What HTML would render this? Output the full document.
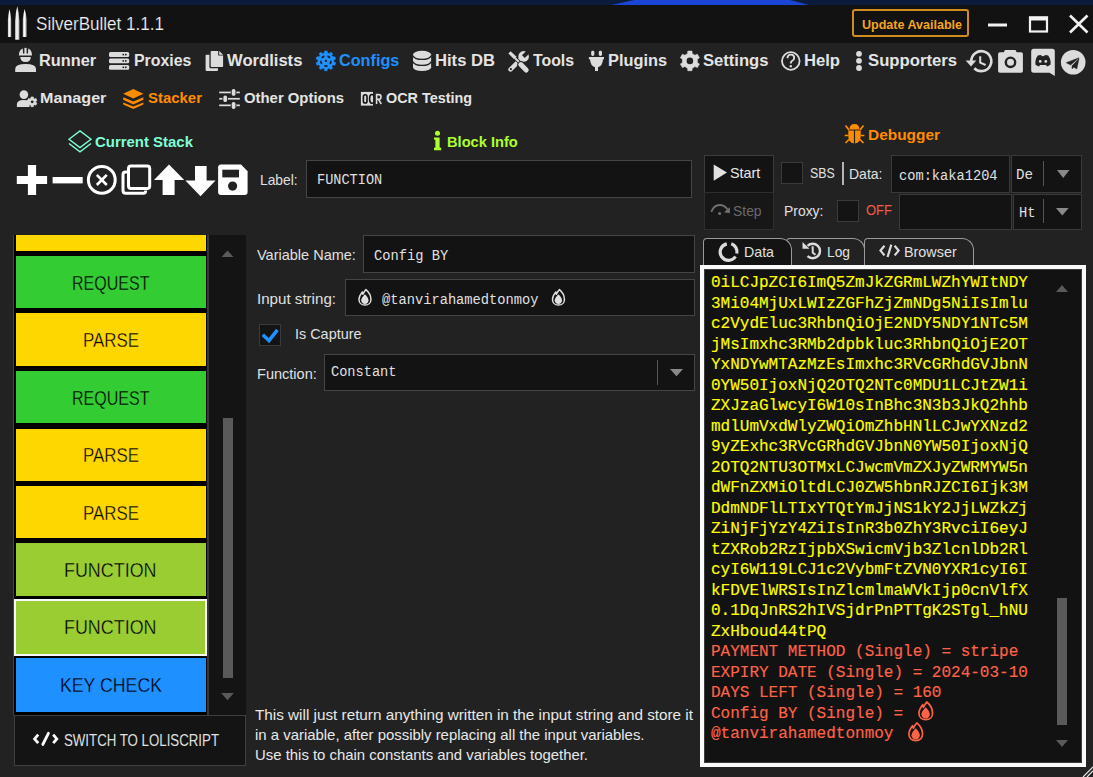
<!DOCTYPE html>
<html><head><meta charset="utf-8"><title>SilverBullet</title>
<style>
html,body{margin:0;padding:0;}
body{width:1093px;height:777px;position:relative;overflow:hidden;background:#222222;font-family:'Liberation Sans', sans-serif;}
svg{position:absolute;overflow:visible;}
</style></head><body>
<svg style="left:0;top:0" width="1093" height="5"><rect width="1093" height="5" fill="#0b1b3b"/><polygon points="611,5 634,0 790,0 809,5" fill="#1a45d6"/></svg>
<div style="position:absolute;left:0px;top:5px;width:1093px;height:38px;background:#121212"></div>
<div style="position:absolute;left:39.00px;top:53.30px;font:bold 16px/1 'Liberation Sans', sans-serif;color:#e4e4e4;white-space:pre;transform:scaleX(1.0196);transform-origin:0 0;">Runner</div>
<div style="position:absolute;left:133.60px;top:53.30px;font:bold 16px/1 'Liberation Sans', sans-serif;color:#e4e4e4;white-space:pre;transform:scaleX(0.9929);transform-origin:0 0;">Proxies</div>
<div style="position:absolute;left:227.40px;top:53.30px;font:bold 16px/1 'Liberation Sans', sans-serif;color:#e4e4e4;white-space:pre;transform:scaleX(1.0384);transform-origin:0 0;">Wordlists</div>
<div style="position:absolute;left:338.70px;top:53.30px;font:bold 16px/1 'Liberation Sans', sans-serif;color:#1e90ff;white-space:pre;transform:scaleX(1.0126);transform-origin:0 0;">Configs</div>
<div style="position:absolute;left:435.00px;top:53.30px;font:bold 16px/1 'Liberation Sans', sans-serif;color:#e4e4e4;white-space:pre;transform:scaleX(1.0384);transform-origin:0 0;">Hits DB</div>
<div style="position:absolute;left:532.50px;top:53.30px;font:bold 16px/1 'Liberation Sans', sans-serif;color:#e4e4e4;white-space:pre;transform:scaleX(0.9883);transform-origin:0 0;">Tools</div>
<div style="position:absolute;left:608.00px;top:53.30px;font:bold 16px/1 'Liberation Sans', sans-serif;color:#e4e4e4;white-space:pre;transform:scaleX(1.0211);transform-origin:0 0;">Plugins</div>
<div style="position:absolute;left:702.50px;top:53.30px;font:bold 16px/1 'Liberation Sans', sans-serif;color:#e4e4e4;white-space:pre;transform:scaleX(1.0376);transform-origin:0 0;">Settings</div>
<div style="position:absolute;left:804.00px;top:53.30px;font:bold 16px/1 'Liberation Sans', sans-serif;color:#e4e4e4;white-space:pre;transform:scaleX(1.0383);transform-origin:0 0;">Help</div>
<div style="position:absolute;left:868.00px;top:53.30px;font:bold 16px/1 'Liberation Sans', sans-serif;color:#e4e4e4;white-space:pre;transform:scaleX(1.0428);transform-origin:0 0;">Supporters</div>
<div style="position:absolute;left:39.60px;top:90.05px;font:bold 15px/1 'Liberation Sans', sans-serif;color:#e4e4e4;white-space:pre;transform:scaleX(1.0764);transform-origin:0 0;">Manager</div>
<div style="position:absolute;left:148.00px;top:90.05px;font:bold 15px/1 'Liberation Sans', sans-serif;color:#ff8c00;white-space:pre;transform:scaleX(0.9960);transform-origin:0 0;">Stacker</div>
<div style="position:absolute;left:243.60px;top:90.05px;font:bold 15px/1 'Liberation Sans', sans-serif;color:#e4e4e4;white-space:pre;transform:scaleX(0.9916);transform-origin:0 0;">Other Options</div>
<div style="position:absolute;left:386.00px;top:90.05px;font:bold 15px/1 'Liberation Sans', sans-serif;color:#e4e4e4;white-space:pre;transform:scaleX(0.9584);transform-origin:0 0;">OCR Testing</div>
<div style="position:absolute;left:36.00px;top:14.70px;font:normal 18px/1 'Liberation Sans', sans-serif;color:#f2f2f2;white-space:pre;transform:scaleX(0.9476);transform-origin:0 0;-webkit-text-stroke:0.2px #121212;">SilverBullet 1.1.1</div>
<div style="position:absolute;left:852px;top:9px;width:113px;height:24px;border:2px solid #d08c1e;border-radius:3px;background:#121212"></div>
<div style="position:absolute;left:861.60px;top:17.95px;font:bold 13px/1 'Liberation Sans', sans-serif;color:#f5a41f;white-space:pre;transform:scaleX(0.9634);transform-origin:0 0;">Update Available</div>
<div style="position:absolute;left:95.00px;top:134.25px;font:bold 15px/1 'Liberation Sans', sans-serif;color:#7fffd4;white-space:pre;transform:scaleX(0.9962);transform-origin:0 0;">Current Stack</div>
<div style="position:absolute;left:447.00px;top:134.25px;font:bold 15px/1 'Liberation Sans', sans-serif;color:#adff2f;white-space:pre;transform:scaleX(0.9763);transform-origin:0 0;">Block Info</div>
<div style="position:absolute;left:868.00px;top:127.45px;font:bold 15px/1 'Liberation Sans', sans-serif;color:#ff8c00;white-space:pre;transform:scaleX(1.0283);transform-origin:0 0;">Debugger</div>
<div style="position:absolute;left:260.40px;top:172.25px;font:normal 15px/1 'Liberation Sans', sans-serif;color:#e0e0e0;white-space:pre;transform:scaleX(0.9199);transform-origin:0 0;">Label:</div>
<div style="position:absolute;left:306px;top:159.6px;width:384.1px;height:36.3px;background:#131313;border:1px solid #454545"></div>
<div style="position:absolute;left:316.50px;top:173.16px;font:normal 14px/1 'Liberation Mono', monospace;color:#e0e0e0;white-space:pre;transform:scaleX(0.9700);transform-origin:0 0;">FUNCTION</div>
<div style="position:absolute;left:13px;top:235px;width:1px;height:479.5px;background:#444"></div>
<div style="position:absolute;left:14px;top:235px;width:193px;height:479.5px;background:#000"></div>
<div style="position:absolute;left:207px;top:235px;width:2px;height:479.5px;background:#383838"></div>
<div style="position:absolute;left:209px;top:235px;width:37px;height:479.5px;background:#141414"></div>
<div style="position:absolute;left:16px;top:235px;width:190px;height:16.400000000000006px;background:#ffd700"></div>
<div style="position:absolute;left:16px;top:256.3px;width:190px;height:51.89999999999998px;background:#33cc33"></div>
<div style="position:absolute;left:16px;top:313.2px;width:190px;height:53.30000000000001px;background:#ffd700"></div>
<div style="position:absolute;left:16px;top:371.1px;width:190px;height:52.299999999999955px;background:#33cc33"></div>
<div style="position:absolute;left:16px;top:428.6px;width:190px;height:52.69999999999999px;background:#ffd700"></div>
<div style="position:absolute;left:16px;top:486.3px;width:190px;height:51.69999999999999px;background:#ffd700"></div>
<div style="position:absolute;left:16px;top:543.2px;width:190px;height:53.299999999999955px;background:#9acd32"></div>
<div style="position:absolute;left:16px;top:600.8px;width:190px;height:52.40000000000009px;background:#9acd32"></div>
<div style="position:absolute;left:16px;top:658.4px;width:190px;height:53.39999999999998px;background:#1e90ff"></div>
<div style="position:absolute;left:14.4px;top:599.2px;width:188.7px;height:52.4px;border:2.2px solid #f8f8f8;background:#9acd32"></div>
<div style="position:absolute;left:222.7px;top:418px;width:10.3px;height:260px;background:#5a5a5a"></div>
<svg style="left:0;top:0" width="1" height="1"><polygon points="221.5,257 233.5,257 227.5,250.5" fill="#5a5a5a"/><polygon points="221.2,693 233.8,693 227.5,700.2" fill="#5a5a5a"/></svg>
<div style="position:absolute;left:13.5px;top:715px;width:230.5px;height:48.5px;background:#141414;border:1px solid #3f3f3f"></div>
<div style="position:absolute;left:63.50px;top:732.54px;font:normal 15.6px/1 'Liberation Sans', sans-serif;color:#e0e0e0;white-space:pre;transform:scaleX(0.8505);transform-origin:0 0;">SWITCH TO LOLISCRIPT</div>
<div style="position:absolute;left:256.60px;top:247.15px;font:normal 15px/1 'Liberation Sans', sans-serif;color:#e0e0e0;white-space:pre;transform:scaleX(0.9669);transform-origin:0 0;">Variable Name:</div>
<div style="position:absolute;left:363.3px;top:235.1px;width:329.7px;height:35.6px;background:#131313;border:1px solid #454545"></div>
<div style="position:absolute;left:373.90px;top:249.26px;font:normal 14px/1 'Liberation Mono', monospace;color:#e0e0e0;white-space:pre;transform:scaleX(0.9812);transform-origin:0 0;">Config BY</div>
<div style="position:absolute;left:256.60px;top:291.15px;font:normal 15px/1 'Liberation Sans', sans-serif;color:#e0e0e0;white-space:pre;transform:scaleX(1.0078);transform-origin:0 0;">Input string:</div>
<div style="position:absolute;left:344.5px;top:279.2px;width:348.5px;height:34.6px;background:#131313;border:1px solid #454545"></div>
<div style="position:absolute;left:382.30px;top:293.16px;font:normal 14px/1 'Liberation Mono', monospace;color:#e0e0e0;white-space:pre;transform:scaleX(0.9803);transform-origin:0 0;">@tanvirahamedtonmoy</div>
<div style="position:absolute;left:258.9px;top:323.9px;width:20.3px;height:20.3px;background:#141414;border:1px solid #3a3a3a"></div>
<div style="position:absolute;left:295.40px;top:325.65px;font:normal 15px/1 'Liberation Sans', sans-serif;color:#e0e0e0;white-space:pre;transform:scaleX(0.9609);transform-origin:0 0;">Is Capture</div>
<div style="position:absolute;left:256.60px;top:365.85px;font:normal 15px/1 'Liberation Sans', sans-serif;color:#e0e0e0;white-space:pre;transform:scaleX(0.9692);transform-origin:0 0;">Function:</div>
<div style="position:absolute;left:324.3px;top:354.1px;width:368.7px;height:34.7px;background:#131313;border:1px solid #454545"></div>
<div style="position:absolute;left:331.00px;top:364.86px;font:normal 14px/1 'Liberation Mono', monospace;color:#e0e0e0;white-space:pre;transform:scaleX(0.9744);transform-origin:0 0;">Constant</div>
<div style="position:absolute;left:656.8px;top:360px;width:1.2px;height:25px;background:#555"></div>
<svg style="left:0;top:0" width="1" height="1"><polygon points="670,369 683,369 676.5,376.2" fill="#8a8a8a"/></svg>
<div style="position:absolute;left:254.50px;top:706.75px;font:normal 15px/1 'Liberation Sans', sans-serif;color:#e8e8e8;white-space:pre;transform:scaleX(1.0181);transform-origin:0 0;">This will just return anything written in the input string and store it</div>
<div style="position:absolute;left:254.50px;top:726.95px;font:normal 15px/1 'Liberation Sans', sans-serif;color:#e8e8e8;white-space:pre;transform:scaleX(0.9939);transform-origin:0 0;">in a variable, after possibly replacing all the input variables.</div>
<div style="position:absolute;left:254.50px;top:746.65px;font:normal 15px/1 'Liberation Sans', sans-serif;color:#e8e8e8;white-space:pre;transform:scaleX(0.9934);transform-origin:0 0;">Use this to chain constants and variables together.</div>
<div style="position:absolute;left:704px;top:155.3px;width:68px;height:35.5px;background:#131313;border:1px solid #3c3c3c"></div>
<div style="position:absolute;left:729.70px;top:165.25px;font:normal 15px/1 'Liberation Sans', sans-serif;color:#e8e8e8;white-space:pre;transform:scaleX(0.9562);transform-origin:0 0;">Start</div>
<div style="position:absolute;left:704px;top:191.8px;width:68px;height:36.5px;background:#171717;border:1px solid #2e2e2e"></div>
<div style="position:absolute;left:733.40px;top:203.15px;font:normal 15px/1 'Liberation Sans', sans-serif;color:#6a6a6a;white-space:pre;transform:scaleX(0.9268);transform-origin:0 0;">Step</div>
<div style="position:absolute;left:781px;top:162.4px;width:20px;height:20px;background:#141414;border:1px solid #3a3a3a"></div>
<div style="position:absolute;left:809.70px;top:165.25px;font:normal 15px/1 'Liberation Sans', sans-serif;color:#e0e0e0;white-space:pre;transform:scaleX(0.8229);transform-origin:0 0;">SBS</div>
<div style="position:absolute;left:842px;top:162.4px;width:2px;height:22.4px;background:#b4b4b4"></div>
<div style="position:absolute;left:849.40px;top:166.15px;font:normal 15px/1 'Liberation Sans', sans-serif;color:#e0e0e0;white-space:pre;transform:scaleX(0.9342);transform-origin:0 0;">Data:</div>
<div style="position:absolute;left:891.3px;top:155.3px;width:116.5px;height:35.5px;background:#131313;border:1px solid #3a3a3a"></div>
<div style="position:absolute;left:899.20px;top:169.16px;font:normal 14px/1 'Liberation Mono', monospace;color:#e0e0e0;white-space:pre;transform:scaleX(0.9779);transform-origin:0 0;">com:kaka1204</div>
<div style="position:absolute;left:1010.6px;top:155.3px;width:69px;height:35.5px;background:#131313;border:1px solid #3a3a3a"></div>
<div style="position:absolute;left:1016.30px;top:168.26px;font:normal 14px/1 'Liberation Mono', monospace;color:#e0e0e0;white-space:pre;transform:scaleX(1.0112);transform-origin:0 0;clip-path:inset(0 30% 0 0);">Def</div>
<div style="position:absolute;left:1043px;top:161.4px;width:1px;height:24.4px;background:#555"></div>
<svg style="left:0;top:0" width="1" height="1"><polygon points="1057,170 1069.5,170 1063.2,178" fill="#8a8a8a"/></svg>
<div style="position:absolute;left:784.00px;top:203.25px;font:normal 15px/1 'Liberation Sans', sans-serif;color:#e0e0e0;white-space:pre;transform:scaleX(0.9267);transform-origin:0 0;">Proxy:</div>
<div style="position:absolute;left:837.1px;top:200.1px;width:19.7px;height:19.6px;background:#141414;border:1px solid #3a3a3a"></div>
<div style="position:absolute;left:866.20px;top:202.42px;font:normal 15.5px/1 'Liberation Sans', sans-serif;color:#f65a40;white-space:pre;transform:scaleX(0.8387);transform-origin:0 0;">OFF</div>
<div style="position:absolute;left:899.3px;top:193.8px;width:111px;height:34.7px;background:#131313;border:1px solid #3a3a3a"></div>
<div style="position:absolute;left:1012.9px;top:193.8px;width:66.7px;height:34.7px;background:#131313;border:1px solid #3a3a3a"></div>
<div style="position:absolute;left:1018.70px;top:206.16px;font:normal 14px/1 'Liberation Mono', monospace;color:#e0e0e0;white-space:pre;transform:scaleX(0.9814);transform-origin:0 0;">Ht</div>
<div style="position:absolute;left:1042.5px;top:199px;width:1px;height:24px;background:#555"></div>
<svg style="left:0;top:0" width="1" height="1"><polygon points="1056,208 1068.6,208 1062.3,215.5" fill="#8a8a8a"/></svg>
<div style="position:absolute;left:786.2px;top:238px;width:77px;height:27px;background:#222;border:1px solid #9a9a9a;border-bottom:none;border-radius:4px 12px 0 0"></div>
<div style="position:absolute;left:863.6px;top:238px;width:108.6px;height:27px;background:#222;border:1px solid #9a9a9a;border-bottom:none;border-radius:4px 12px 0 0"></div>
<div style="position:absolute;left:702.8px;top:238px;width:87.2px;height:27px;background:#131313;border:1px solid #9a9a9a;border-bottom:none;border-radius:4px 12px 0 0"></div>
<div style="position:absolute;left:743.80px;top:244.05px;font:normal 15px/1 'Liberation Sans', sans-serif;color:#e0e0e0;white-space:pre;transform:scaleX(0.9467);transform-origin:0 0;">Data</div>
<div style="position:absolute;left:827.00px;top:244.25px;font:normal 15px/1 'Liberation Sans', sans-serif;color:#e0e0e0;white-space:pre;transform:scaleX(0.9189);transform-origin:0 0;">Log</div>
<div style="position:absolute;left:903.50px;top:244.25px;font:normal 15px/1 'Liberation Sans', sans-serif;color:#e0e0e0;white-space:pre;transform:scaleX(0.9579);transform-origin:0 0;">Browser</div>
<div style="position:absolute;left:700px;top:265px;width:377.5px;height:494.3px;background:#121212;border:4px solid #fafafa;box-shadow:inset 0 0 0 1px #3c3c3c"></div>
<div style="position:absolute;left:1057px;top:598px;width:10px;height:127px;background:#5a5a5a"></div>
<svg style="left:0;top:0" width="1" height="1"><polygon points="1056,292 1068,292 1062,285" fill="#5a5a5a"/><polygon points="1056,740 1068,740 1062,747" fill="#5a5a5a"/></svg>
<div style="position:absolute;left:711.00px;top:275.24px;font:normal 16px/1 'Liberation Mono', monospace;color:#ffff00;white-space:pre;-webkit-text-stroke:0.15px #ffff00;">0iLCJpZCI6ImQ5ZmJkZGRmLWZhYWItNDY</div>
<div style="position:absolute;left:711.00px;top:295.74px;font:normal 16px/1 'Liberation Mono', monospace;color:#ffff00;white-space:pre;-webkit-text-stroke:0.15px #ffff00;">3Mi04MjUxLWIzZGFhZjZmNDg5NiIsImlu</div>
<div style="position:absolute;left:711.00px;top:316.24px;font:normal 16px/1 'Liberation Mono', monospace;color:#ffff00;white-space:pre;-webkit-text-stroke:0.15px #ffff00;">c2VydEluc3RhbnQiOjE2NDY5NDY1NTc5M</div>
<div style="position:absolute;left:711.00px;top:336.74px;font:normal 16px/1 'Liberation Mono', monospace;color:#ffff00;white-space:pre;-webkit-text-stroke:0.15px #ffff00;">jMsImxhc3RMb2dpbkluc3RhbnQiOjE2OT</div>
<div style="position:absolute;left:711.00px;top:357.24px;font:normal 16px/1 'Liberation Mono', monospace;color:#ffff00;white-space:pre;-webkit-text-stroke:0.15px #ffff00;">YxNDYwMTAzMzEsImxhc3RVcGRhdGVJbnN</div>
<div style="position:absolute;left:711.00px;top:377.74px;font:normal 16px/1 'Liberation Mono', monospace;color:#ffff00;white-space:pre;-webkit-text-stroke:0.15px #ffff00;">0YW50IjoxNjQ2OTQ2NTc0MDU1LCJtZW1i</div>
<div style="position:absolute;left:711.00px;top:398.24px;font:normal 16px/1 'Liberation Mono', monospace;color:#ffff00;white-space:pre;-webkit-text-stroke:0.15px #ffff00;">ZXJzaGlwcyI6W10sInBhc3N3b3JkQ2hhb</div>
<div style="position:absolute;left:711.00px;top:418.74px;font:normal 16px/1 'Liberation Mono', monospace;color:#ffff00;white-space:pre;-webkit-text-stroke:0.15px #ffff00;">mdlUmVxdWlyZWQiOmZhbHNlLCJwYXNzd2</div>
<div style="position:absolute;left:711.00px;top:439.24px;font:normal 16px/1 'Liberation Mono', monospace;color:#ffff00;white-space:pre;-webkit-text-stroke:0.15px #ffff00;">9yZExhc3RVcGRhdGVJbnN0YW50IjoxNjQ</div>
<div style="position:absolute;left:711.00px;top:459.74px;font:normal 16px/1 'Liberation Mono', monospace;color:#ffff00;white-space:pre;-webkit-text-stroke:0.15px #ffff00;">2OTQ2NTU3OTMxLCJwcmVmZXJyZWRMYW5n</div>
<div style="position:absolute;left:711.00px;top:480.24px;font:normal 16px/1 'Liberation Mono', monospace;color:#ffff00;white-space:pre;-webkit-text-stroke:0.15px #ffff00;">dWFnZXMiOltdLCJ0ZW5hbnRJZCI6Ijk3M</div>
<div style="position:absolute;left:711.00px;top:500.74px;font:normal 16px/1 'Liberation Mono', monospace;color:#ffff00;white-space:pre;-webkit-text-stroke:0.15px #ffff00;">DdmNDFlLTIxYTQtYmJjNS1kY2JjLWZkZj</div>
<div style="position:absolute;left:711.00px;top:521.24px;font:normal 16px/1 'Liberation Mono', monospace;color:#ffff00;white-space:pre;-webkit-text-stroke:0.15px #ffff00;">ZiNjFjYzY4ZiIsInR3b0ZhY3RvciI6eyJ</div>
<div style="position:absolute;left:711.00px;top:541.74px;font:normal 16px/1 'Liberation Mono', monospace;color:#ffff00;white-space:pre;-webkit-text-stroke:0.15px #ffff00;">tZXRob2RzIjpbXSwicmVjb3ZlcnlDb2Rl</div>
<div style="position:absolute;left:711.00px;top:562.24px;font:normal 16px/1 'Liberation Mono', monospace;color:#ffff00;white-space:pre;-webkit-text-stroke:0.15px #ffff00;">cyI6W119LCJ1c2VybmFtZVN0YXR1cyI6I</div>
<div style="position:absolute;left:711.00px;top:582.74px;font:normal 16px/1 'Liberation Mono', monospace;color:#ffff00;white-space:pre;-webkit-text-stroke:0.15px #ffff00;">kFDVElWRSIsInZlcmlmaWVkIjp0cnVlfX</div>
<div style="position:absolute;left:711.00px;top:603.24px;font:normal 16px/1 'Liberation Mono', monospace;color:#ffff00;white-space:pre;-webkit-text-stroke:0.15px #ffff00;">0.1DqJnRS2hIVSjdrPnPTTgK2STgl_hNU</div>
<div style="position:absolute;left:711.00px;top:623.74px;font:normal 16px/1 'Liberation Mono', monospace;color:#ffff00;white-space:pre;-webkit-text-stroke:0.15px #ffff00;">ZxHboud44tPQ</div>
<div style="position:absolute;left:711.00px;top:644.24px;font:normal 16px/1 'Liberation Mono', monospace;color:#ff6347;white-space:pre;-webkit-text-stroke:0.15px #ff6347;">PAYMENT METHOD (Single) = stripe</div>
<div style="position:absolute;left:711.00px;top:664.74px;font:normal 16px/1 'Liberation Mono', monospace;color:#ff6347;white-space:pre;-webkit-text-stroke:0.15px #ff6347;">EXPIRY DATE (Single) = 2024-03-10</div>
<div style="position:absolute;left:711.00px;top:685.24px;font:normal 16px/1 'Liberation Mono', monospace;color:#ff6347;white-space:pre;-webkit-text-stroke:0.15px #ff6347;">DAYS LEFT (Single) = 160</div>
<div style="position:absolute;left:711.00px;top:705.74px;font:normal 16px/1 'Liberation Mono', monospace;color:#ff6347;white-space:pre;-webkit-text-stroke:0.15px #ff6347;">Config BY (Single) =</div>
<div style="position:absolute;left:711.00px;top:726.24px;font:normal 16px/1 'Liberation Mono', monospace;color:#ff6347;white-space:pre;-webkit-text-stroke:0.15px #ff6347;">@tanvirahamedtonmoy</div>
<div style="position:absolute;left:71.85px;top:273.73px;font:normal 19.5px/1 'Liberation Sans', sans-serif;color:#000;white-space:pre;transform:scaleX(0.8221);transform-origin:0 0;-webkit-text-stroke:0.35px #33cc33;">REQUEST</div>
<div style="position:absolute;left:82.60px;top:330.62px;font:normal 19.5px/1 'Liberation Sans', sans-serif;color:#000;white-space:pre;transform:scaleX(0.8659);transform-origin:0 0;-webkit-text-stroke:0.35px #ffd700;">PARSE</div>
<div style="position:absolute;left:71.85px;top:388.53px;font:normal 19.5px/1 'Liberation Sans', sans-serif;color:#000;white-space:pre;transform:scaleX(0.8221);transform-origin:0 0;-webkit-text-stroke:0.35px #33cc33;">REQUEST</div>
<div style="position:absolute;left:82.60px;top:446.03px;font:normal 19.5px/1 'Liberation Sans', sans-serif;color:#000;white-space:pre;transform:scaleX(0.8659);transform-origin:0 0;-webkit-text-stroke:0.35px #ffd700;">PARSE</div>
<div style="position:absolute;left:82.60px;top:503.72px;font:normal 19.5px/1 'Liberation Sans', sans-serif;color:#000;white-space:pre;transform:scaleX(0.8659);transform-origin:0 0;-webkit-text-stroke:0.35px #ffd700;">PARSE</div>
<div style="position:absolute;left:64.35px;top:560.62px;font:normal 19.5px/1 'Liberation Sans', sans-serif;color:#000;white-space:pre;transform:scaleX(0.9181);transform-origin:0 0;-webkit-text-stroke:0.35px #9acd32;">FUNCTION</div>
<div style="position:absolute;left:64.35px;top:618.22px;font:normal 19.5px/1 'Liberation Sans', sans-serif;color:#000;white-space:pre;transform:scaleX(0.9181);transform-origin:0 0;-webkit-text-stroke:0.35px #9acd32;">FUNCTION</div>
<div style="position:absolute;left:59.60px;top:675.82px;font:normal 19.5px/1 'Liberation Sans', sans-serif;color:#000;white-space:pre;transform:scaleX(0.9078);transform-origin:0 0;-webkit-text-stroke:0.35px #1e90ff;">KEY CHECK</div>
<svg style="left:0;top:0" width="1" height="1">
<rect x="988" y="23.5" width="19" height="3" fill="#f2f2f2"/>
<rect x="1030" y="17.5" width="17" height="14" fill="none" stroke="#f2f2f2" stroke-width="2.2"/>
<rect x="1029" y="16.5" width="19" height="4" fill="#f2f2f2"/>
<path d="M1070 15.5 L1087.5 32.5 M1087.5 15.5 L1070 32.5" stroke="#f2f2f2" stroke-width="2.6"/>
</svg>
<svg style="left:0;top:0" width="1" height="1" fill="#fff">
<rect x="16.8" y="176" width="30.3" height="8" />
<rect x="27.9" y="165" width="8.2" height="30" />
<rect x="52.6" y="177" width="30.1" height="6.4" />
<circle cx="101.8" cy="179.9" r="13.4" fill="none" stroke="#fff" stroke-width="3"/>
<path d="M96.8 174.8 L106.8 185 M106.8 174.8 L96.8 185" stroke="#fff" stroke-width="2.6" fill="none"/>
<rect x="128.5" y="166" width="21.2" height="22.4" rx="2.5" fill="none" stroke="#fff" stroke-width="3"/>
<path d="M127 171.9 L125.5 171.9 Q123 171.9 123 174.4 L123 190.5 Q123 193.2 125.7 193.2 L143.5 193.2 Q145.7 193.2 145.7 190.5" fill="none" stroke="#fff" stroke-width="3"/>
<polygon points="169,164.6 184.2,180 174.6,180 174.6,195 162.6,195 162.6,180 154,180"/>
<polygon points="195,165.9 206.6,165.9 206.6,180.6 215.5,180.6 200.5,196.2 185.4,180.6 195,180.6"/>
<path d="M218.1 167.5 Q218.1 164.6 221 164.6 L241 164.6 L247.6 171.2 L247.6 192.1 Q247.6 195 244.7 195 L221 195 Q218.1 195 218.1 192.1 Z"/>
<rect x="222.3" y="169.7" width="16.7" height="7.7" fill="#222"/>
<circle cx="232.6" cy="186.1" r="4.6" fill="#222"/>
</svg>
<svg style="left:0;top:0" width="1" height="1"><path d="M262.8 334.8 L269 340.6 L277.4 329.9" fill="none" stroke="#1e90ff" stroke-width="3.6"/></svg>
<svg style="left:0;top:0" width="1" height="1"><polygon points="713.7,164.6 727,172.6 713.7,180.7" fill="#e0e0e0"/></svg>
<svg style="left:0;top:0" width="1" height="1" fill="#dcdcdc">
<!-- runner hard hat -->
<path d="M18.9 55.6 Q18.9 50 22.8 48.6 L23 53.5 L24.4 53.5 L24.4 48 Q25.5 47.6 26.6 48 L26.6 53.5 L28 53.5 L28.2 48.6 Q32 50 32 55.6 Z"/>
<path d="M20.3 57 L30.8 57 Q30.8 62 25.55 62 Q20.3 62 20.3 57 Z"/>
<path d="M15.2 72 L36 72 L36 69 Q36 64 25.6 64 Q15.2 64 15.2 69 Z"/>
<!-- proxies server -->
<rect x="109" y="52" width="20.2" height="5" rx="1.5"/>
<rect x="109" y="58.5" width="20.2" height="4.8" rx="1.5"/>
<rect x="109" y="64.9" width="20.2" height="4.8" rx="1.5"/>
<g fill="#222"><rect x="122.5" y="53.8" width="1.6" height="1.6"/><rect x="125" y="53.8" width="1.6" height="1.6"/>
<rect x="122.5" y="60.1" width="1.6" height="1.6"/><rect x="125" y="60.1" width="1.6" height="1.6"/>
<rect x="122.5" y="66.5" width="1.6" height="1.6"/><rect x="125" y="66.5" width="1.6" height="1.6"/></g>
<!-- wordlists files -->
<path d="M205.6 55.5 Q205.6 54.7 206.4 54.7 L209.4 54.7 L209.4 67 Q209.4 68.2 210.6 68.2 L218 68.2 L218 70.1 Q218 70.9 217.2 70.9 L206.4 70.9 Q205.6 70.9 205.6 70.1 Z"/>
<path d="M210.7 51.8 Q210.7 51 211.5 51 L218.2 51 L218.2 55.6 L223.1 55.6 L223.1 66.3 Q223.1 67.1 222.3 67.1 L211.5 67.1 Q210.7 67.1 210.7 66.3 Z"/>
<path d="M219.2 51 L223.1 54.8 L219.2 54.8 Z"/>
<!-- hits db -->
<ellipse cx="422.05" cy="54.6" rx="9.05" ry="3.8"/>
<rect x="413" y="54.6" width="18.1" height="12.6"/>
<ellipse cx="422.05" cy="67.2" rx="9.05" ry="3.8"/>
<path d="M413 55.6 A9.05 3.8 0 0 0 431.1 55.6" fill="none" stroke="#222" stroke-width="1.4"/>
<path d="M413 61.6 A9.05 3.8 0 0 0 431.1 61.6" fill="none" stroke="#222" stroke-width="1.4"/>
<!-- tools -->
<circle cx="523.6" cy="56.4" r="5.3"/>
<path d="M523.4 56.6 L529.5 50.5" stroke="#222" stroke-width="4"/>
<path d="M510.5 69.5 L520.5 59.5" stroke="#dcdcdc" stroke-width="4.4" stroke-linecap="round"/>
<circle cx="510.9" cy="69.1" r="1.1" fill="#222"/>
<path d="M508.4 53.6 L510.6 51.2 L516.8 57 L514.4 59.4 Z"/>
<path d="M515.2 58.2 L520.6 63.6" stroke="#222" stroke-width="3.6"/>
<path d="M515.2 58.2 L520.6 63.6" stroke="#dcdcdc" stroke-width="2"/>
<path d="M520.8 64.6 L526.2 70" stroke="#222" stroke-width="7" stroke-linecap="round"/>
<path d="M520.8 64.6 L526.2 70" stroke="#dcdcdc" stroke-width="5" stroke-linecap="round"/>
<!-- plugins plug -->
<rect x="591.2" y="50.8" width="3.1" height="5.2" rx="1.4"/>
<rect x="598.8" y="50.8" width="3.2" height="5.2" rx="1.4"/>
<path d="M588.9 57 L604 57 L604 59 L603 59.5 Q602.5 66 598 67.3 L598 71 L595 71 L595 67.3 Q590.5 66 590 59.5 L588.9 59 Z"/>
<!-- settings gear -->
<path fill-rule="evenodd" d=""/>
</svg>
<svg style="left:0;top:0" width="1" height="1"><polygon points="687.58,53.66 687.82,51.12 691.98,51.12 692.22,53.66 695.01,55.27 697.33,54.20 699.41,57.82 697.33,59.29 697.33,62.51 699.41,63.98 697.33,67.60 695.01,66.53 692.22,68.14 691.98,70.68 687.82,70.68 687.58,68.14 684.79,66.53 682.47,67.60 680.39,63.98 682.47,62.51 682.47,59.29 680.39,57.82 682.47,54.20 684.79,55.27" fill="#dcdcdc" stroke="#dcdcdc" stroke-width="0.6" stroke-linejoin="round"/><circle cx="689.9" cy="60.9" r="3.3" fill="#222"/><polygon points="324.47,53.03 324.62,51.08 327.18,51.08 327.33,53.03 329.37,53.69 330.63,52.20 332.71,53.71 331.69,55.37 332.94,57.11 334.84,56.65 335.63,59.09 333.83,59.83 333.83,61.97 335.63,62.71 334.84,65.15 332.94,64.69 331.69,66.43 332.71,68.09 330.63,69.60 329.37,68.11 327.33,68.77 327.18,70.72 324.62,70.72 324.47,68.77 322.43,68.11 321.17,69.60 319.09,68.09 320.11,66.43 318.86,64.69 316.96,65.15 316.17,62.71 317.97,61.97 317.97,59.83 316.17,59.09 316.96,56.65 318.86,57.11 320.11,55.37 319.09,53.71 321.17,52.20 322.43,53.69" fill="#1e90ff" stroke="#1e90ff" stroke-width="0.6" stroke-linejoin="round"/><ellipse cx="328.84" cy="56.85" rx="1.9" ry="1.0" transform="rotate(36.0 328.84 56.85)" fill="#222"/><ellipse cx="330.66" cy="62.45" rx="1.9" ry="1.0" transform="rotate(108.0 330.66 62.45)" fill="#222"/><ellipse cx="325.90" cy="65.90" rx="1.9" ry="1.0" transform="rotate(180.0 325.90 65.90)" fill="#222"/><ellipse cx="321.14" cy="62.45" rx="1.9" ry="1.0" transform="rotate(252.0 321.14 62.45)" fill="#222"/><ellipse cx="322.96" cy="56.85" rx="1.9" ry="1.0" transform="rotate(324.0 322.96 56.85)" fill="#222"/><circle cx="325.9" cy="60.9" r="1.2" fill="#222"/><circle cx="790.8" cy="61" r="8.8" fill="none" stroke="#dcdcdc" stroke-width="1.8"/><path d="M787.5 58.2 Q787.5 54.6 790.9 54.6 Q794.2 54.6 794.2 57.9 Q794.2 60 792 61 Q790.8 61.7 790.8 63.4" fill="none" stroke="#dcdcdc" stroke-width="1.9"/><circle cx="790.8" cy="66.3" r="1.2" fill="#dcdcdc"/><circle cx="859" cy="53.8" r="2.9" fill="#dcdcdc"/><circle cx="859" cy="60.8" r="2.9" fill="#dcdcdc"/><circle cx="859" cy="68" r="2.9" fill="#dcdcdc"/><path d="M971.3 61.2 A10 10 0 1 1 974.3 68.3" fill="none" stroke="#dcdcdc" stroke-width="2.6"/><polygon points="965.7,60.6 976.3,60.6 971,66.4" fill="#dcdcdc"/><path d="M980.2 56.2 L980.2 62.6 L985.6 65" fill="none" stroke="#dcdcdc" stroke-width="2"/><path d="M998.1 54 Q998.1 52.2 999.9 52.2 L1003.8 52.2 L1005 50 L1015.5 50 L1016.7 52.2 L1021.1 52.2 Q1022.9 52.2 1022.9 54 L1022.9 71 Q1022.9 72.8 1021.1 72.8 L999.9 72.8 Q998.1 72.8 998.1 71 Z" fill="#dcdcdc"/><circle cx="1010.5" cy="62.3" r="4.7" fill="none" stroke="#222" stroke-width="2.4"/><path d="M1031.2 51.3 Q1031.2 48.8 1033.7 48.8 L1052.3 48.8 Q1054.8 48.8 1054.8 51.3 L1054.8 76 L1049.5 72.7 L1033.7 72.7 Q1031.2 72.7 1031.2 70.2 Z" fill="#dcdcdc"/><path d="M1035.4 64.6 Q1035 59.5 1037.8 55.6 Q1040 54.8 1041.3 55.2 L1041.9 56.2 Q1043 56 1044.1 56.2 L1044.7 55.2 Q1046 54.8 1048.2 55.6 Q1051 59.5 1050.6 64.6 Q1048.8 66.2 1047 66.4 L1046 65 L1040 65 L1039 66.4 Q1037.2 66.2 1035.4 64.6 Z" fill="#222"/><circle cx="1040.2" cy="61.4" r="1.4" fill="#dcdcdc"/><circle cx="1045.8" cy="61.4" r="1.4" fill="#dcdcdc"/><circle cx="1073.2" cy="62.2" r="12.3" fill="#dcdcdc"/><polygon points="1066.2,62.7 1079,57.8 1070.6,64.9 1068.6,63.9" fill="#222" stroke="#222" stroke-width="0.5" stroke-linejoin="round"/><polygon points="1072,65.8 1079,58.6 1076.8,68.9 1073.8,67.3 1072,68.8" fill="#222" stroke="#222" stroke-width="0.5" stroke-linejoin="round"/></svg>
<svg style="left:0;top:0" width="1" height="1" fill="#dcdcdc"><circle cx="23.9" cy="94.6" r="4.3"/><path d="M16.9 106.9 L29.5 106.9 L29.5 100.5 Q27.5 99.9 23.5 99.9 Q16.9 99.9 16.9 104.5 Z"/><polygon points="30.93,98.32 30.96,96.96 33.44,96.96 33.47,98.32 34.58,98.96 35.78,98.31 37.01,100.45 35.84,101.16 35.84,102.44 37.01,103.15 35.78,105.29 34.58,104.64 33.47,105.28 33.44,106.64 30.96,106.64 30.93,105.28 29.82,104.64 28.62,105.29 27.39,103.15 28.56,102.44 28.56,101.16 27.39,100.45 28.62,98.31 29.82,98.96" fill="#dcdcdc" stroke="#dcdcdc" stroke-width="0.6" stroke-linejoin="round"/><circle cx="32.2" cy="101.8" r="1.4" fill="#222"/></svg>
<svg style="left:0;top:0" width="1" height="1" fill="#ff8c00">
<polygon points="123.2,93.7 133.3,89 143.4,93.7 133.3,98.4"/>
<polygon points="123.2,97.2 133.3,101.6 143.4,97.2 143.4,99.8 133.3,104.4 123.2,99.8"/>
<polygon points="123.2,102.4 133.3,106.4 143.4,102.4 143.4,104.6 133.3,109 123.2,104.6"/>
</svg>
<svg style="left:0;top:0" width="1" height="1" fill="#dcdcdc">
<rect x="219.2" y="91.6" width="20.6" height="1.7"/>
<rect x="219.2" y="97.9" width="20.6" height="1.7"/>
<rect x="219.2" y="104.5" width="20.6" height="1.7"/>
<rect x="231.8" y="89" width="3.6" height="6.8" rx="1.6"/>
<rect x="223.4" y="95.4" width="3.6" height="6.7" rx="1.6"/>
<rect x="231.8" y="102" width="3.6" height="6.9" rx="1.6"/>
<g fill="#222"><rect x="230.8" y="91.6" width="1" height="1.7"/><rect x="235.4" y="91.6" width="1" height="1.7"/>
<rect x="222.4" y="97.9" width="1" height="1.7"/><rect x="227" y="97.9" width="1" height="1.7"/>
<rect x="230.8" y="104.5" width="1" height="1.7"/><rect x="235.4" y="104.5" width="1" height="1.7"/></g>
</svg>
<svg style="left:0;top:0" width="1" height="1">
<rect x="360.9" y="91.9" width="12.1" height="13.7" fill="#dcdcdc"/>
<rect x="363.4" y="94.7" width="3.6" height="8.3" rx="1.8" fill="none" stroke="#111" stroke-width="1.6"/>
<path d="M373.6 95.2 Q372.6 94.3 371.4 94.5 Q369.6 94.9 369.6 98.8 Q369.6 102.8 371.4 103.2 Q372.6 103.4 373.6 102.5" fill="none" stroke="#111" stroke-width="1.6"/>
<path d="M376.6 104 L376.6 94.6 L379 94.6 Q381 94.6 381 97 Q381 99.3 379 99.3 L376.6 99.3 M378.6 99.3 L381.2 104" fill="none" stroke="#dcdcdc" stroke-width="1.6"/>
</svg>
<svg style="left:0;top:0" width="1" height="1" fill="none" stroke="#7fffd4" stroke-width="1.4">
<polygon points="69,139.3 80,131 91,139.3 80,147.6"/>
<polyline points="69,143.5 80,151.8 91,143.5"/>
</svg>
<svg style="left:0;top:0" width="1" height="1" fill="#adff2f">
<circle cx="437.5" cy="133.3" r="2.5"/>
<path d="M434 137.5 L439.6 137.5 L439.6 147.3 L441.2 148 L441.2 150.2 L434 150.2 L434 148 L435.4 147.3 L435.4 140 L434 139.4 Z"/>
</svg>
<svg style="left:0;top:0" width="1" height="1" fill="#ff8c00">
<path d="M849.5 129.5 Q849.5 124 854.5 124 Q859.5 124 859.5 129.5 Z"/>
<path d="M848.3 130.5 L853.9 130.5 L853.9 143.6 Q848.3 142.5 848.3 136 Z"/>
<path d="M855.1 130.5 L860.7 130.5 L860.7 136 Q860.7 142.5 855.1 143.6 Z"/>
<path d="M845.5 125.5 L849 130 M863.5 125.5 L860 130 M844.7 135.5 L848.5 135.5 M864.4 135.5 L860.5 135.5 M845.5 143 L849 139.5 M863.5 143 L860 139.5" stroke="#ff8c00" stroke-width="1.7"/>
</svg>
<svg style="left:0;top:0" width="1" height="1"><g transform="translate(358.1 288.8) scale(0.98)"><path d="M7 16.6 C3.4 16.6 0.9 14.2 0.9 10.8 C0.9 7.6 2.8 5.2 4.3 3.2 L4.9 5.6 C5.8 3.6 6.8 1.8 8 0.8 C10.6 3 13.1 6.6 13.1 10.8 C13.1 14.2 10.6 16.6 7 16.6 Z" fill="none" stroke="#e0e0e0" stroke-width="1.5" stroke-linejoin="round"/><path d="M7 15.6 C4.8 15.6 3.2 14 3.2 11.8 C3.2 9.6 5 7.6 7 5.6 C9 7.6 10.6 9.6 10.6 11.8 C10.6 14 9.2 15.6 7 15.6 Z" fill="#e0e0e0"/></g><g transform="translate(551.6 288.8) scale(0.98)"><path d="M7 16.6 C3.4 16.6 0.9 14.2 0.9 10.8 C0.9 7.6 2.8 5.2 4.3 3.2 L4.9 5.6 C5.8 3.6 6.8 1.8 8 0.8 C10.6 3 13.1 6.6 13.1 10.8 C13.1 14.2 10.6 16.6 7 16.6 Z" fill="none" stroke="#e0e0e0" stroke-width="1.5" stroke-linejoin="round"/><path d="M7 15.6 C4.8 15.6 3.2 14 3.2 11.8 C3.2 9.6 5 7.6 7 5.6 C9 7.6 10.6 9.6 10.6 11.8 C10.6 14 9.2 15.6 7 15.6 Z" fill="#e0e0e0"/></g><g transform="translate(917.9 701.1) scale(1.12)"><path d="M7 16.6 C3.4 16.6 0.9 14.2 0.9 10.8 C0.9 7.6 2.8 5.2 4.3 3.2 L4.9 5.6 C5.8 3.6 6.8 1.8 8 0.8 C10.6 3 13.1 6.6 13.1 10.8 C13.1 14.2 10.6 16.6 7 16.6 Z" fill="none" stroke="#ff6347" stroke-width="1.5" stroke-linejoin="round"/><path d="M7 15.6 C4.8 15.6 3.2 14 3.2 11.8 C3.2 9.6 5 7.6 7 5.6 C9 7.6 10.6 9.6 10.6 11.8 C10.6 14 9.2 15.6 7 15.6 Z" fill="#ff6347"/></g><g transform="translate(907.9 722) scale(1.12)"><path d="M7 16.6 C3.4 16.6 0.9 14.2 0.9 10.8 C0.9 7.6 2.8 5.2 4.3 3.2 L4.9 5.6 C5.8 3.6 6.8 1.8 8 0.8 C10.6 3 13.1 6.6 13.1 10.8 C13.1 14.2 10.6 16.6 7 16.6 Z" fill="none" stroke="#ff6347" stroke-width="1.5" stroke-linejoin="round"/><path d="M7 15.6 C4.8 15.6 3.2 14 3.2 11.8 C3.2 9.6 5 7.6 7 5.6 C9 7.6 10.6 9.6 10.6 11.8 C10.6 14 9.2 15.6 7 15.6 Z" fill="#ff6347"/></g></svg>
<svg style="left:0;top:0" width="1" height="1">
<path d="M711.3 211.8 Q714 205 719.7 205 Q724.5 205 727.5 209.5" fill="none" stroke="#707070" stroke-width="1.8"/>
<polygon points="730,207.2 729.8,213.2 724,212.3" fill="#707070"/>
<circle cx="719.6" cy="213.4" r="1.5" fill="#707070"/>
</svg>
<svg style="left:0;top:0" width="1" height="1" fill="none" stroke="#fafafa" stroke-width="2.8">
<polyline points="38.2,734.7 34.6,738.9 38.2,743.1"/>
<path d="M48.4 733.3 L42.8 744.5" stroke-linecap="round"/>
<polyline points="53.2,734.7 56.8,738.9 53.2,743.1"/>
</svg>
<svg style="left:0;top:0" width="1" height="1" fill="none" stroke="#dcdcdc">
<path d="M726.8 243.9 A8.3 8.3 0 1 0 735.5 256.5" stroke-width="3.2"/>
<path d="M731.3 243.8 A8.3 8.3 0 0 1 736.8 253.5" stroke-width="3.2"/>
<path d="M807.54 245.84 A7.3 7.3 0 1 1 807.54 256.16" stroke-width="2.4"/>
<polygon points="802.5,242 802.5,248.8 809.5,248.8" fill="#dcdcdc" stroke="none"/>
<path d="M812.6 246.3 L812.8 252.8 L815.5 254.8" stroke-width="2"/>
<polyline points="884.5,245.8 880.5,250.6 884.5,255.4" stroke-width="2.2"/>
<path d="M891.3 244.6 L887.6 257" stroke-width="2.2"/>
<polyline points="894.6,245.8 898.6,250.6 894.6,255.4" stroke-width="2.2"/>
</svg>
<svg style="left:0;top:0" width="1" height="1">
<defs><linearGradient id="bg1" x1="0" x2="1" y1="0" y2="0"><stop offset="0" stop-color="#bdbdbd"/><stop offset="0.45" stop-color="#ffffff"/><stop offset="1" stop-color="#a8a8a8"/></linearGradient></defs>
<path d="M7.9 37 L7.9 19.5 Q8.2 14 9.5 8.9 Q10.9 14 11.2 19.5 L11.2 37 Z" fill="url(#bg1)"/>
<path d="M15.1 39.8 L15.1 21 Q15.5 13 17.25 6.1 Q19 13 19.4 21 L19.4 39.8 Z" fill="url(#bg1)"/>
<path d="M22.8 37 L22.8 19.5 Q23.1 14 24.7 8.9 Q26.3 14 26.6 19.5 L26.6 37 Z" fill="url(#bg1)"/>
</svg>
<svg style="left:0;top:0" width="1" height="1" fill="none" stroke="#e8e8e8" stroke-width="1.2">
<path d="M1083 777 L1093 767 M1087 777 L1093 771"/>
</svg>
</body></html>
